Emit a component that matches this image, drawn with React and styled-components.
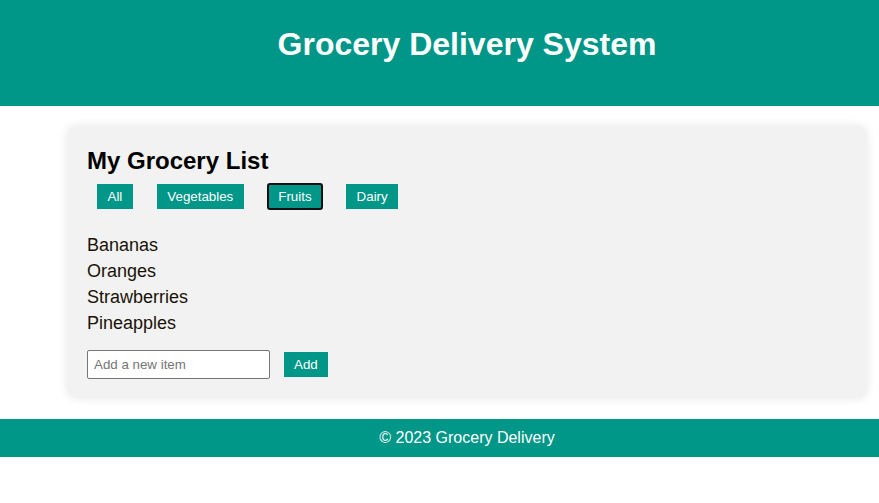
import React, { useState } from "react";
import styled, { createGlobalStyle } from "styled-components";

const GlobalStyle = createGlobalStyle`
  html, body {
    margin: 0;
    padding: 0;
    overflow: hidden;
    background: #ffffff;
  }
  body {
    font-family: "Liberation Sans", Arial, sans-serif;
  }
  * {
    box-sizing: border-box;
  }
`;

const items = [
  { name: "Bananas", category: "Fruits" },
  { name: "Oranges", category: "Fruits" },
  { name: "Strawberries", category: "Fruits" },
  { name: "Pineapples", category: "Fruits" },
  { name: "Carrots", category: "Vegetables" },
  { name: "Milk", category: "Dairy" },
];

const filters = ["All", "Vegetables", "Fruits", "Dairy"];

const App = () => {
  const [filter, setFilter] = useState("Fruits");
  const [text, setText] = useState("");
  const [list, setList] = useState(items);

  const shown = list.filter((i) => filter === "All" || i.category === filter);

  const addItem = () => {
    if (!text.trim()) return;
    setList([...list, { name: text, category: filter === "All" ? "Fruits" : filter }]);
    setText("");
  };

  return (
    <>
      <GlobalStyle />
      <Page>
        <Header>
          <Title>Grocery Delivery System</Title>
        </Header>

        <Main>
          <Card>
            <ListTitle>My Grocery List</ListTitle>
            <Filters>
              {filters.map((f) => (
                <FilterButton key={f} $active={f === filter} onClick={() => setFilter(f)}>
                  {f}
                </FilterButton>
              ))}
            </Filters>

            <List>
              {shown.map((i) => (
                <Item key={i.name}>{i.name}</Item>
              ))}
            </List>

            <AddRow>
              <Input
                type="text"
                placeholder="Add a new item"
                value={text}
                onChange={(e) => setText(e.target.value)}
              />
              <Button onClick={addItem}>Add</Button>
            </AddRow>
          </Card>
        </Main>

        <Footer>© 2023 Grocery Delivery</Footer>
      </Page>
    </>
  );
};

export default App;

// the original page is a bit wider than the window, so everything centres at x=467
const Page = styled.div`
  width: 934px;
`;

const Header = styled.header`
  background-color: #009688;
  color: white;
  text-align: center;
  padding: 26px 0 43px;
`;

const Title = styled.h1`
  margin: 0;
  font-size: 32px;
  font-weight: bold;
  line-height: 37px;
`;

const Main = styled.main`
  padding: 20px 0 21px;
`;

const Card = styled.div`
  max-width: 800px;
  margin: 0 auto;
  padding: 21px 20px 19px;
  background-color: #f2f2f2;
  border-radius: 10px;
  box-shadow: 0 0 10px rgba(0, 0, 0, 0.1);
`;

const ListTitle = styled.h2`
  margin: 0 0 10px;
  font-size: 24px;
  line-height: 27px;
  color: #000;
`;

const Filters = styled.div`
  display: flex;
  gap: 24px;
  padding-left: 10px;
`;

const FilterButton = styled.button`
  border: none;
  border-radius: ${(p) => (p.$active ? "2px" : "0")};
  background-color: #009688;
  color: white;
  font-family: "Liberation Sans", Arial, sans-serif;
  font-size: 13.33px;
  line-height: 15px;
  padding: 5px 10.5px;
  cursor: pointer;
  outline: ${(p) => (p.$active ? "2px solid #101010" : "none")};
  outline-offset: -1px;
`;

const List = styled.ul`
  list-style: none;
  margin: 23px 0 14px;
  padding: 0;
`;

const Item = styled.li`
  font-size: 18px;
  line-height: 26px;
  color: #1a1208;
`;

const AddRow = styled.div`
  display: flex;
  align-items: center;
  gap: 14px;
`;

const Input = styled.input`
  width: 183px;
  height: 29px;
  padding: 0 6px;
  border: 1px solid #767676;
  border-radius: 2px;
  background: white;
  font-family: "Liberation Sans", Arial, sans-serif;
  font-size: 13.33px;
  outline: none;

  &::placeholder {
    color: #757575;
  }
`;

const Button = styled.button`
  border: none;
  background-color: #009688;
  color: white;
  font-family: "Liberation Sans", Arial, sans-serif;
  font-size: 13.33px;
  line-height: 15px;
  padding: 5px 10px;
  cursor: pointer;
`;

const Footer = styled.footer`
  background-color: #009688;
  color: white;
  text-align: center;
  font-size: 16px;
  line-height: 18px;
  padding: 10px 0;
`;
